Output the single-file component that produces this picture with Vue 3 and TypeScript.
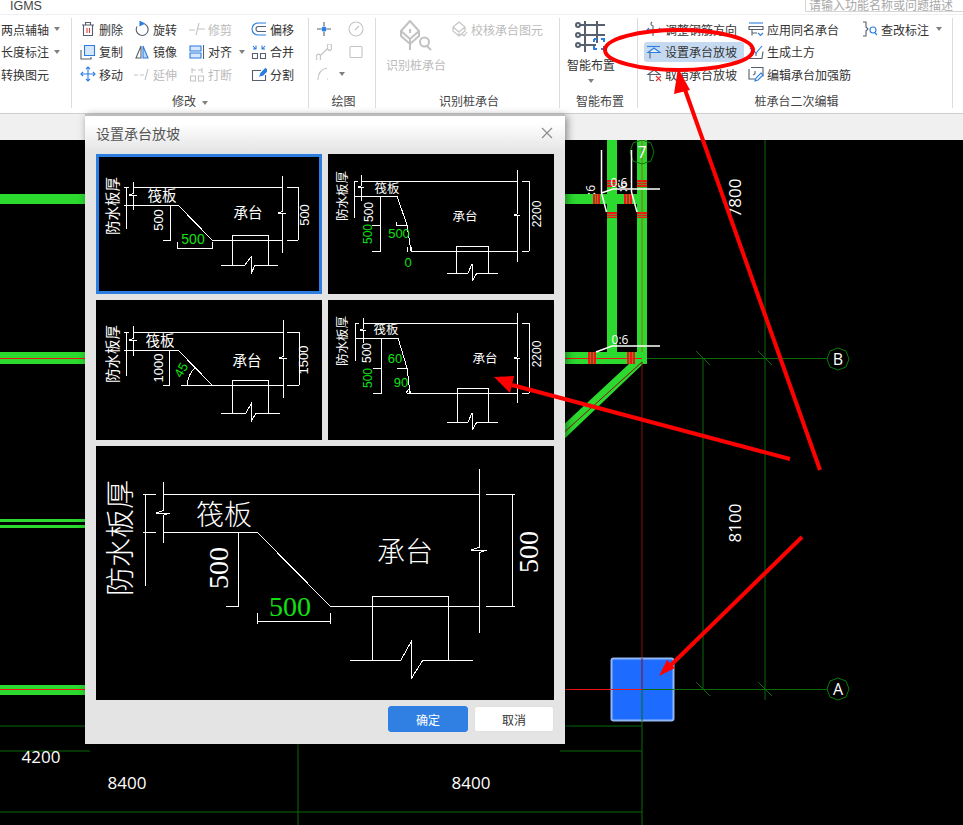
<template>
  <div class="app">
    <div class="titlebar">
      <span class="app-name">IGMS</span>
      <div class="search">请输入功能名称或问题描述</div>
    </div>

    <div class="ribbon">
      <section v-for="g in groups" :key="g.cls" class="group" :class="g.cls">
        <div class="group-body">
          <div v-if="g.big" class="big-tool" :class="{ off: g.big.off }">
            <RibbonIcon :parts="g.big.icon" :size="32" :box="32" :sw="g.big.sw" />
            <span class="big-label">{{ g.big.label }}</span>
            <i v-if="g.big.caret" class="caret"></i>
          </div>
          <div class="tools">
            <div
              v-for="(t, i) in g.tools"
              :key="i"
              class="tool"
              :class="{ off: t.off, active: t.active }"
            >
              <RibbonIcon v-if="t.icon" :parts="t.icon" />
              <span v-if="t.label">{{ t.label }}</span>
              <i v-if="t.caret" class="caret"></i>
            </div>
          </div>
        </div>
        <div class="group-label">
          {{ g.label }}<i v-if="g.caret" class="caret"></i>
        </div>
      </section>
    </div>

    <div class="strip"></div>

    <div class="canvas">
      <svg class="cad" viewBox="0 140 963 685" width="963" height="685">
        <!-- 墙 -->
        <g fill="#2bd92f">
          <rect x="0" y="194" width="90" height="10" />
          <rect x="560" y="194" width="78" height="10" />
          <rect x="607" y="140" width="10" height="213" />
          <rect x="637" y="140" width="10" height="224" />
          <rect x="0" y="352" width="90" height="12" />
          <rect x="560" y="352" width="87" height="12" />
          <rect x="0" y="519" width="90" height="3" />
          <rect x="0" y="525" width="90" height="3" />
          <rect x="0" y="685" width="90" height="10" />
          <polygon points="630,363 645,362 560,443 560,428" />
        </g>
        <g fill="#f01414">
          <rect x="593" y="194" width="7" height="10" />
          <rect x="624" y="194" width="8" height="10" />
          <rect x="607" y="180" width="10" height="7" />
          <rect x="637" y="180" width="10" height="7" />
          <rect x="607" y="212" width="10" height="6" />
          <rect x="637" y="212" width="10" height="6" />
          <rect x="588" y="352" width="8" height="12" />
          <rect x="627" y="352" width="8" height="12" />
        </g>
        <!-- 红色箍筋之间的细缝 -->
        <path
          fill="none"
          stroke="#2bd92f"
          stroke-opacity="0.6"
          d="M595.500 194V204M597.500 194V204M626.500 194V204M629.500 194V204M607 182.500H617M607 184.500H617M637 182.500H647M637 184.500H647M607 214.500H617M607 216.500H617M637 214.500H647M637 216.500H647M590.500 352V364M593.500 352V364M629.500 352V364M632.500 352V364"
        />
        <g fill="none" stroke-width="1">
          <path stroke="#a5601c" d="M642 140V352" />
          <path stroke="#f01414" d="M0 358.500H90M560 358.500H642M0 689.500H90M560 689.500H642" />
          <path stroke="#8b0f0f" d="M642 362V689M642 362 560 436" />
          <path
            stroke="#0b6b0b"
            d="M647 358.500H827M642 689.500H827M703 358V689M765 140V700M642 689V825M0 726H90M0 751H90M560 751H642M0 812H642M298 744V825M560 726H642M696 351l14 14M758 351l14 14M696 682l14 14M758 682l14 14"
          />
        </g>
        <g fill="none" stroke="#0b7a0b">
          <polygon points="838,348 846,351 849,359 846,367 838,370 830,367 827,359 830,351" />
          <polygon points="838,678 846,681 849,689 846,697 838,700 830,697 827,689 830,681" />
          <polygon points="642,140 651,143 654,152 651,161 642,164 633,161 630,152 633,143" />
        </g>
        <rect class="pile-cap" x="611.500" y="658.500" width="62" height="62" rx="2" />
        <path stroke="#0b6b0b" d="M642 689V721" />
        <path stroke="#8b0f0f" d="M642 658V689" />
        <path stroke="#f01414" d="M611 689.500H642" />
        <path stroke="#0b6b0b" d="M642 689.500H674" />
        <g fill="none" stroke="#fff" stroke-width="1.500">
          <path d="M601.500 150V193L606.500 212M601.500 193 613 189H660M631.500 150V192L637 212" />
          <path d="M596 352 612 346H660" />
        </g>
        <text class="slope" x="620" y="344">0:6</text>
        <text class="slope" x="619" y="187">0:6</text>
        <text class="slope" transform="translate(595 190) rotate(-90)">:6</text>
        <text class="slope" transform="translate(627 187) rotate(-90)">:6</text>
        <text class="axis" x="838" y="365">B</text>
        <text class="axis" x="838" y="695">A</text>
        <text class="axis" x="642" y="158">7</text>
        <text class="dim" transform="translate(741 198) rotate(-90)">7800</text>
        <text class="dim" transform="translate(741 523) rotate(-90)">8100</text>
        <text class="dim" x="41" y="763">4200</text>
        <text class="dim" x="127" y="789">8400</text>
        <text class="dim" x="471" y="789">8400</text>
      </svg>
    </div>

    <div class="dialog">
      <header class="dialog-head">
        <span>设置承台放坡</span>
        <svg class="close" viewBox="0 0 12 12" width="12" height="12">
          <path d="M1 1 11 11M11 1 1 11" />
        </svg>
      </header>
      <div class="dialog-grid">
        <div
          v-for="(p, i) in panels"
          :key="i"
          class="panel"
          :class="{ selected: p.selected, wide: p.wide }"
        >
          <svg :viewBox="p.box" width="100%" height="100%">
            <path v-for="(d, j) in p.lines" :key="j" class="cad-line" :d="d" />
            <text
              v-for="(t, j) in p.texts"
              :key="j"
              class="cad-text"
              :class="{ green: t.g }"
              :font-size="t.s"
              :font-family="t.f"
              :transform="`translate(${t.x} ${t.y}) rotate(${t.r ?? 0})`"
              :dy="t.r ? '.35em' : 0"
            >{{ t.t }}</text>
          </svg>
        </div>
      </div>
      <footer class="dialog-foot">
        <button class="btn primary">确定</button>
        <button class="btn">取消</button>
      </footer>
    </div>

    <!-- 标注 -->
    <svg class="marks" viewBox="0 0 963 825" width="963" height="825">
      <g fill="none" stroke="#f00" stroke-width="4">
        <ellipse cx="679" cy="50" rx="74" ry="20" />
        <path d="M820 470 683 84" />
        <path d="M790 459 512 385" />
        <path d="M802 537 670 666" />
      </g>
      <g fill="#f00">
        <polygon points="678,68 690,90 674,94" />
        <polygon points="494,377 514,376 510,393" />
        <polygon points="659,676 667,660 675,668" />
      </g>
    </svg>
  </div>
</template>

<script setup lang="ts">
import { h } from 'vue'
import type { FunctionalComponent } from 'vue'

// [path, 线色, 填充]
type Part = [string, string, string?]

interface Tool {
  label?: string
  icon?: Part[]
  off?: boolean
  caret?: boolean
  active?: boolean
}

interface Group {
  label: string
  cls: string
  caret?: boolean
  big?: { label: string; icon: Part[]; off?: boolean; caret?: boolean; sw?: number }
  tools: Tool[]
}

interface CadText {
  t: string
  x: number
  y: number
  s: number
  r?: number
  g?: boolean
  f?: string
}

interface Panel {
  box: string
  selected?: boolean
  wide?: boolean
  lines: string[]
  texts: CadText[]
}

const RibbonIcon: FunctionalComponent<{ parts: Part[]; size?: number; box?: number; sw?: number }> = (props) => {
  const size = props.size ?? 16
  const box = props.box ?? 16
  return h(
    'svg',
    { class: 'ico', width: size, height: size, viewBox: `0 0 ${box} ${box}`, style: 'display:block;flex:none' },
    props.parts.map((p) =>
      h('path', { d: p[0], stroke: p[1], fill: p[2] ?? 'none', 'stroke-width': props.sw ?? 1.1 })
    )
  )
}
RibbonIcon.props = ['parts', 'size', 'box', 'sw']

const DK = '#56606e'
const BL = '#2b7de0'
const RD = '#e23a3a'
const OFF = '#c4c4c4'

const groups: Group[] = [
  {
    label: '',
    cls: 'g-axis',
    tools: [{ label: '两点辅轴', caret: true }, { label: '长度标注', caret: true }, { label: '转换图元' }]
  },
  {
    label: '修改',
    cls: 'g-edit',
    caret: true,
    tools: [
      { label: '删除', icon: [['M2 4h12M5.500 4V1.500h5V4M3.500 4v10.500h9V4', DK], ['M7 7v5M9.500 7v5', RD]] },
      { label: '旋转', icon: [['M8.500 2.500a6 6 0 1 1-5.500 3', DK], ['M6 .5 10 2.500 6 4.500z', BL, BL]] },
      { label: '修剪', off: true, icon: [['M0 9h6M9 8h7M10 2 7 14', OFF]] },
      { label: '偏移', icon: [['M15 2H7a6 6 0 0 0 0 12h8', BL], ['M15 5.500H7.500a2.500 2.500 0 0 0 0 5H15', DK]] },
      { label: '复制', icon: [['M1 6v9h10v-2', DK], ['M4.500 1.500h10v10h-10z', BL, '#d6e7fa']] },
      { label: '镜像', icon: [['M7 2 2 14h5z', DK], ['M9 2l5 12H9z', BL, '#bcd8f6']] },
      { label: '对齐', caret: true, icon: [['M1 2h11v5H1zM1 9h11v5H1z', BL, '#d6e7fa'], ['M14.500 1v14', DK]] },
      { label: '合并', icon: [['M1.500 9.500h5v5h-5zM9.500 9.500h5v5h-5z', DK], ['M2 2l2.500 3M14 2l-2.500 3M5 1.500V5H2M11 1.500V5h3', BL]] },
      { label: '移动', icon: [['M8 1v14M1 8h14', BL, 'none'], ['M6 3l2-2 2 2M6 13l2 2 2-2M3 6 1 8l2 2M13 6l2 2-2 2', BL]] },
      { label: '延伸', off: true, icon: [['M0 9h4M6 9h4M14 3l-3 11', OFF]] },
      { label: '打断', off: true, icon: [['M1.500 10h5v5h-5zM9.500 10h5v5h-5zM3 2v5M13 2v5M7 4H3M9 4h4', OFF]] },
      { label: '分割', icon: [['M10 4.500H1.500v10h13V9', DK], ['M9 10l1-3 4.500-4.500 2 2L12 9z', BL, BL]] }
    ]
  },
  {
    label: '绘图',
    cls: 'g-draw',
    tools: [
      { icon: [['M8 1v4M8 11v4M1 8h4M11 8h4', DK], ['M6 8a2 2 0 1 0 4 0 2 2 0 1 0-4 0', BL, BL]] },
      { off: true, icon: [['M1 8a7 7 0 1 0 14 0 7 7 0 1 0-14 0M7 9l4-4', OFF]] },
      { off: true, icon: [['M4 12 12 4M1 13.500a2 2 0 1 0 3 0 2 2 0 1 0-3 0M12 3a2 2 0 1 0 3 0 2 2 0 1 0-3 0', OFF]] },
      { off: true, icon: [['M3 2.500h10a1 1 0 0 1 1 1v9a1 1 0 0 1-1 1H3a1 1 0 0 1-1-1v-9a1 1 0 0 1 1-1z', OFF]] },
      { off: true, caret: true, icon: [['M2 14C2 7 6 3 11 2M11 13h1', OFF]] }
    ]
  },
  {
    label: '识别桩承台',
    cls: 'g-recog',
    big: {
      label: '识别桩承台',
      off: true,
      sw: 2,
      icon: [
        ['M10 1 1 11v5l9 8 9-8v-5zM1 11l9 8 9-8M10 19v11M10 13V9', '#c2c2c2'],
        ['M20 22a4.500 4.500 0 1 0 9 0 4.500 4.500 0 1 0-9 0M27 26l4 4', '#c2c2c2']
      ]
    },
    tools: [
      { label: '校核承台图元', off: true, icon: [['M7 1 1 6v4l6 5 6-5V6zM1 6l6 5 6-5M7 11v4', OFF], ['M10 13l2 2 3-4', OFF]] }
    ]
  },
  {
    label: '智能布置',
    cls: 'g-smart',
    big: {
      label: '智能布置',
      caret: true,
      sw: 2,
      icon: [
        ['M3 5h27M3 15h27M3 25h18M10 1v31M22 1v22', DK],
        ['M1 5a2 2 0 1 0 4 0 2 2 0 1 0-4 0M1 15a2 2 0 1 0 4 0 2 2 0 1 0-4 0M1 25a2 2 0 1 0 4 0 2 2 0 1 0-4 0', DK, '#fff'],
        ['M19 19h3M26 19h3v3M29 26v3h-3M22 29h-3v-3M19 22v-3', BL]
      ]
    },
    tools: []
  },
  {
    label: '桩承台二次编辑',
    cls: 'g-cap',
    tools: [
      { label: '调整钢筋方向', icon: [['M1 9h14M3 7 1 9l2 2M13 7l2 2-2 2', BL], ['M6 1C4 3 5 4 7 5v10', DK]] },
      { label: '应用同名承台', icon: [['M1 2h14', BL], ['M1 5.500h14v3H1zM4 8.500v6M4 12h5', DK], ['M10 12l2.500 2.500L15 12', BL]] },
      { label: '查改标注', caret: true, icon: [['M1 1h3v5l2 2-2 2v5H1', DK], ['M8 9a3 3 0 1 0 6 0 3 3 0 1 0-6 0M13 12l2 2', BL]] },
      { label: '设置承台放坡', active: true, icon: [['M1 2.500h13', BL], ['M2 8.500 8 4l6 4.500z', BL, '#e6f0fb'], ['M4 8.500v6', DK]] },
      { label: '生成土方', icon: [['M1 14.500h13l1-7M4 12V8M8 12V9', DK], ['M2 4l6 5 6-7', BL]] },
      { label: '' },
      { label: '取消承台放坡', icon: [['M1 2.500h13', BL], ['M2 8.500 8 4l6 4.500zM4 8.500v6h4', DK], ['M10 10l5 5M15 10l-5 5', RD]] },
      { label: '编辑承台加强筋', icon: [['M3 1.500h12v9M1 3v10h6', DK], ['M7 15l1-3 5-5 2 2-5 5z', BL], ['M7 5v3l-2 1', DK]] }
    ]
  }
]

// 竖线中间的折断符号
const vbreak = (x: number, top: number, bot: number, y: number, w: number) =>
  `M${x} ${top}V${y - w / 3}L${x - w} ${y}H${x + w}L${x} ${y + w / 3}V${bot}`

const rect = (x1: number, y1: number, x2: number, y2: number) => `M${x1} ${y2}V${y1}H${x2}V${y2}`

const SANS = 'Liberation Sans'
const SERIF = 'Liberation Serif'

const panels: Panel[] = [
  {
    box: '96 154 226 140',
    selected: true,
    lines: [
      'M133 187H282M287 187H298V240M287 240H298M212 240H282',
      vbreak(133, 182, 210, 195, 4),
      vbreak(282, 176, 253, 213, 4),
      'M124 187H129M126 187V229M124 205H178L212 240',
      'M170 205V240H163',
      'M177 242V248H212V242',
      rect(232, 235, 268, 265),
      'M221 265H245L251 257V274L255 265H278'
    ],
    texts: [
      { t: '防水板厚', x: 113, y: 206, s: 14.5, r: -90 },
      { t: '筏板', x: 162, y: 201, s: 14.5 },
      { t: '承台', x: 248, y: 218, s: 14.5 },
      { t: '500', x: 158, y: 220, s: 13, r: -90, f: SANS },
      { t: '500', x: 304, y: 215, s: 13, r: -90, f: SANS },
      { t: '500', x: 193, y: 244, s: 14, g: true, f: SANS }
    ]
  },
  {
    box: '328 154 226 140',
    lines: [
      'M361 181H518M522 181H529V251M522 251H529M411 251H518',
      vbreak(361, 175, 201, 187, 3),
      vbreak(517, 170, 262, 215, 3),
      'M354 181H358M354 181V218M354 196H397L407 225L411 251',
      'M380 196V251H372M372 225H380',
      'M396 222V225H407M407 247V252M411 247V252',
      rect(456, 246, 488, 273),
      'M447 273H468L472 264V281L477 273H498'
    ],
    texts: [
      { t: '防水板厚', x: 343, y: 196, s: 12.5, r: -90 },
      { t: '筏板', x: 387, y: 193, s: 12.5 },
      { t: '承台', x: 465, y: 221, s: 12.5 },
      { t: '500', x: 369, y: 212, s: 12, r: -90, f: SANS },
      { t: '500', x: 368, y: 234, s: 12, r: -90, g: true, f: SANS },
      { t: '500', x: 399, y: 238, s: 13, g: true, f: SANS },
      { t: '0', x: 408, y: 267, s: 13, g: true, f: SANS },
      { t: '2200', x: 537, y: 214, s: 12, r: -90, f: SANS }
    ]
  },
  {
    box: '96 300 226 140',
    lines: [
      'M133 332H283M287 332H299V385M287 385H299M181 385H283',
      vbreak(133, 326, 356, 340, 4),
      vbreak(283, 320, 398, 358, 4),
      'M124 332H129M126 332V376M124 350H178L212 385',
      'M169 350V385H163',
      'M187 385C188 377 190 372 195 368',
      rect(232, 380, 268, 413),
      'M221 413H246L251 404V422L256 413H280'
    ],
    texts: [
      { t: '防水板厚', x: 113, y: 354, s: 14.5, r: -90 },
      { t: '筏板', x: 160, y: 346, s: 14.5 },
      { t: '承台', x: 247, y: 366, s: 14.5 },
      { t: '1000', x: 158, y: 368, s: 13, r: -90, f: SANS },
      { t: '1500', x: 303, y: 360, s: 13, r: -90, f: SANS },
      { t: '45', x: 181, y: 370, s: 13, r: -60, g: true, f: SANS }
    ]
  },
  {
    box: '328 300 226 140',
    lines: [
      'M363 323H517M522 323H529V393M522 393H529M407 393H517',
      vbreak(363, 318, 343, 330, 3),
      vbreak(517, 313, 403, 358, 3),
      'M355 323H359M355 323V361M355 338H398L407 368L410 393',
      'M381 338V393H373M373 368H381M397 368H407',
      'M406 393L409 389L411 393',
      rect(457, 388, 488, 422),
      'M447 422H468L472 413V430L477 422H498'
    ],
    texts: [
      { t: '防水板厚', x: 343, y: 341, s: 12.5, r: -90 },
      { t: '筏板', x: 386, y: 334, s: 12.5 },
      { t: '承台', x: 485, y: 363, s: 12.5 },
      { t: '500', x: 367, y: 353, s: 12, r: -90, f: SANS },
      { t: '500', x: 368, y: 378, s: 12, r: -90, g: true, f: SANS },
      { t: '60', x: 395, y: 363, s: 13, g: true, f: SANS },
      { t: '90', x: 401, y: 387, s: 13, g: true, f: SANS },
      { t: '2200', x: 537, y: 354, s: 12, r: -90, f: SANS }
    ]
  },
  {
    box: '96 446 458 254',
    wide: true,
    lines: [
      'M163 494H479M486 494H515M143 494H156',
      vbreak(163, 482, 543, 513, 7),
      vbreak(479, 469, 633, 550, 8),
      'M145 494V586M143 532H156M163 532H257L330 606H479M486 606H515',
      'M512 494V606',
      'M238 532V606H226',
      'M257 613V624M257 621H330M330 613V624',
      rect(372, 596, 448, 660),
      'M350 660H401L411 642V679L423 660H473'
    ],
    texts: [
      { t: '防水板厚', x: 121, y: 538, s: 29, r: -90 },
      { t: '筏板', x: 224, y: 525, s: 28 },
      { t: '承台', x: 405, y: 562, s: 28 },
      { t: '500', x: 218, y: 568, s: 28, r: -90, f: SERIF },
      { t: '500', x: 528, y: 552, s: 28, r: -90, f: SERIF },
      { t: '500', x: 290, y: 616, s: 28, g: true, f: SERIF }
    ]
  }
]
</script>

<style scoped>
.app {
  position: relative;
  width: 963px;
  height: 825px;
  overflow: hidden;
  display: flex;
  flex-direction: column;
  font-family: "Noto Sans CJK SC", "Liberation Sans", sans-serif;
  font-size: 12px;
  color: #333;
  background: #000;
}

.titlebar {
  height: 14px;
  flex: none;
  display: flex;
  justify-content: space-between;
  background: #fff;
  overflow: hidden;
}

.app-name {
  margin-left: 10px;
  font-family: "Liberation Sans", sans-serif;
  font-size: 12.500px;
  line-height: 13px;
  color: #444;
}

.search {
  width: 158px;
  height: 12px;
  box-sizing: border-box;
  padding-left: 3px;
  border: 1px solid #d6d6d6;
  border-top: 0;
  border-right: 0;
  line-height: 10px;
  color: #a8a8a8;
  white-space: nowrap;
  overflow: hidden;
}

.ribbon {
  height: 100px;
  flex: none;
  box-sizing: border-box;
  display: flex;
  padding: 3px 0 5px;
  background: #fff;
  border-top: 1px solid #f0f0f0;
  border-bottom: 1px solid #cfcfcf;
}

.group {
  flex: none;
  box-sizing: border-box;
  display: flex;
  flex-direction: column;
  border-right: 1px solid #dcdcdc;
}

.group-body {
  flex: 1;
  display: flex;
}

.group-label {
  height: 17px;
  padding-left: 3px;
  line-height: 19px;
  text-align: center;
  color: #444;
}

.group-label .caret {
  margin-left: 6px;
}

.tools {
  display: grid;
  grid-auto-rows: 22.500px;
  align-content: start;
}

.tool {
  display: flex;
  align-items: center;
  gap: 3px;
  white-space: nowrap;
}

.tool.off,
.big-tool.off {
  color: #bbb;
}

.tool.active {
  justify-self: start;
  height: 20px;
  align-self: center;
  margin-left: -2px;
  padding: 0 7px 0 2px;
  border-radius: 3px;
  background: #c5daf0;
}

.caret {
  display: inline-block;
  width: 0;
  height: 0;
  margin-left: 4px;
  border-left: 3.500px solid transparent;
  border-right: 3.500px solid transparent;
  border-top: 4px solid #808080;
  vertical-align: middle;
}

.big-tool {
  flex: none;
  display: flex;
  flex-direction: column;
  align-items: center;
  padding-top: 2px;
}

.big-label {
  margin-top: 4px;
  line-height: 17px;
  white-space: nowrap;
}

.big-tool .caret {
  margin: 6px 0 0;
}

.g-axis {
  width: 72px;
}

.g-axis .group-body {
  padding-left: 1px;
}

.g-axis .tool .caret {
  margin-left: 2px;
}

.g-edit {
  width: 237px;
}

.g-edit .group-body {
  padding-left: 8px;
}

.g-edit .group-label {
  padding-left: 0;
}

.g-edit .tools {
  grid-template-columns: 54px 55px 62px auto;
}

.g-draw {
  width: 67px;
}

.g-draw .group-body {
  padding-left: 7px;
}

.g-draw .tools {
  grid-template-columns: 32px 32px;
}

.g-draw .tool:nth-child(5) {
  grid-column: 1;
}

.g-recog {
  width: 184px;
}

.g-recog .big-tool {
  width: 60px;
  margin: 0 6px 0 10px;
}

.g-smart {
  width: 78px;
}

.g-smart .big-tool {
  width: 48px;
  margin-left: 7px;
}

.g-cap {
  width: 315px;
}

.g-cap .group-body {
  padding-left: 8px;
}

.g-cap .tools {
  grid-template-columns: 102px 114px auto;
}

.strip {
  height: 26px;
  flex: none;
  background: #f0f0f0;
}

.canvas {
  flex: 1;
  background: #000;
}

.cad {
  display: block;
}

.pile-cap {
  fill: #1e6cff;
  stroke: #8fb6f5;
  stroke-width: 2;
}

.axis,
.dim,
.slope {
  fill: #fff;
  text-anchor: middle;
  font-family: "Open Sans", sans-serif;
}

.axis {
  font-size: 16px;
}

.dim {
  font-size: 17px;
}

.slope {
  font-size: 12px;
}

.dialog {
  position: absolute;
  left: 85px;
  top: 114px;
  width: 480px;
  height: 630px;
  box-sizing: border-box;
  display: flex;
  flex-direction: column;
  border-top: 2px solid #bdbdbd;
  background: #e4e4e4;
  box-shadow: 2px 2px 8px rgba(0, 0, 0, 0.45);
}

.dialog-head {
  height: 38px;
  flex: none;
  box-sizing: border-box;
  display: flex;
  align-items: center;
  justify-content: space-between;
  padding: 0 12px 4px 11px;
  font-size: 14px;
  color: #555;
  background: linear-gradient(#fff 20%, #e4e4e4 95%);
}

.close path {
  fill: none;
  stroke: #8c8c8c;
  stroke-width: 1.200;
}

.dialog-grid {
  display: grid;
  grid-template-columns: 226px 226px;
  grid-template-rows: 140px 140px 254px;
  gap: 6px;
  padding-left: 11px;
}

.panel {
  background: #000;
  overflow: hidden;
}

.panel svg {
  display: block;
}

.panel.wide {
  grid-column: 1 / 3;
}

.panel.selected {
  outline: 3px solid #2b7de0;
  outline-offset: -3px;
}

.cad-line {
  fill: none;
  stroke: #fff;
  stroke-width: 1;
  shape-rendering: crispEdges;
}

.cad-text {
  fill: #fff;
  text-anchor: middle;
}

.panel.wide .cad-text {
  font-weight: 300;
}

.cad-text.green {
  fill: #12e012;
}

.dialog-foot {
  display: flex;
  justify-content: flex-end;
  gap: 6px;
  padding: 6px 11px 0 0;
}

.btn {
  width: 80px;
  height: 26px;
  padding: 0;
  border: 1px solid #e0e0e0;
  border-radius: 3px;
  background: #fff;
  color: #333;
  font-family: inherit;
  font-size: 12px;
}

.btn.primary {
  border-color: #2f80e2;
  background: #2f80e2;
  color: #fff;
}

.marks {
  position: absolute;
  left: 0;
  top: 0;
  pointer-events: none;
}
</style>
